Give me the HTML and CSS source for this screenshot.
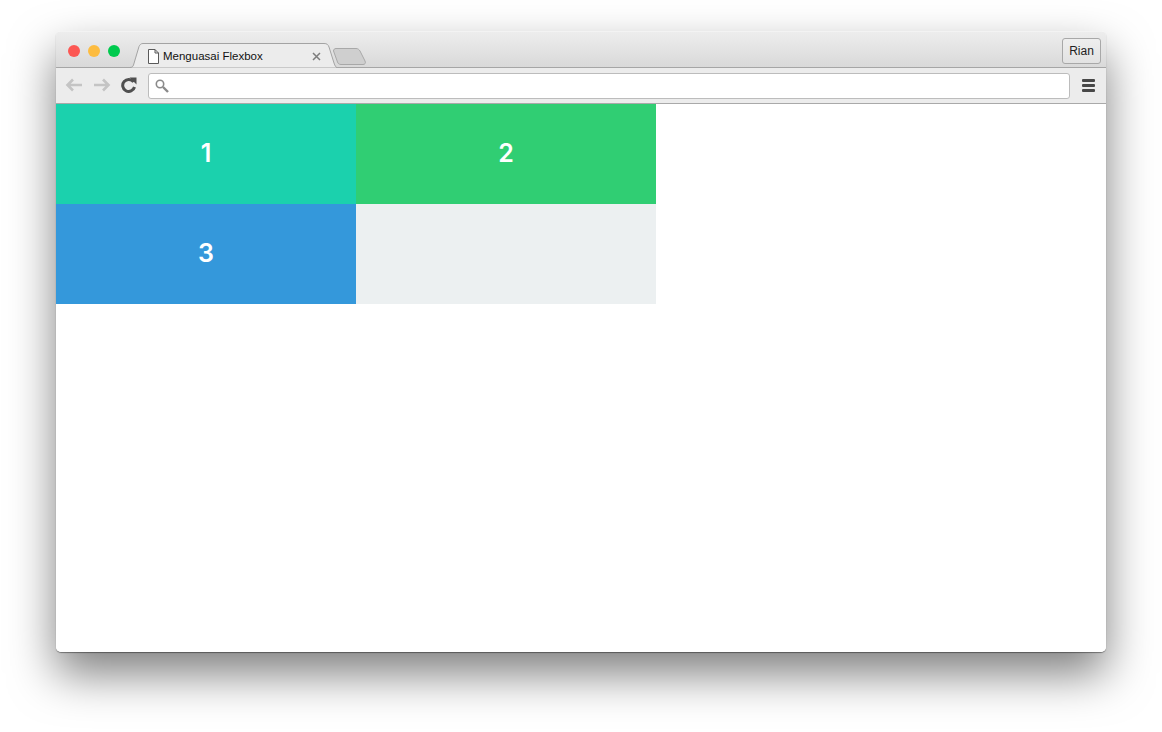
FILE: index.html

```html
<!DOCTYPE html>
<html lang="en">
<head>
    <meta charset="UTF-8">
    <meta name="viewport" content="width=device-width, initial-scale=1.0">
    <title>Menguasai Flexbox</title>
    <link rel="stylesheet" href="styles.css">
</head>
<body>
    <div class="window">
        <div class="titlebar">
            <div class="lights">
                <span class="light red"></span>
                <span class="light yellow"></span>
                <span class="light green"></span>
            </div>
            <div class="tab">
                <svg class="tab-shape" width="207" height="25" viewBox="0 0 207 25">
                    <path d="M0 24.500 C2 24.500 3 23.500 3.500 22 L9 3.500 C10 1.500 11 .5 13 .5 L194 .5 C197 .5 198 1.500 199 4 L204 20 C205 23 206 24.500 207 24.500" fill="#ececec" stroke="#a3a3a3"/>
                </svg>
                <svg class="page-icon" width="11" height="15" viewBox="0 0 11 15">
                    <path d="M.5 .5 H7 L10.500 4 V14.500 H.5 Z M7 .5 V4 H10.500" fill="#fff" stroke="#5a5a5a"/>
                </svg>
                <span class="tab-title">Menguasai Flexbox</span>
                <svg class="tab-close" width="9" height="9" viewBox="0 0 9 9">
                    <path d="M1 1 L8 8 M8 1 L1 8" stroke="#7d7d7d" stroke-width="1.500"/>
                </svg>
            </div>
            <svg class="new-tab" width="33" height="17" viewBox="0 0 33 17">
                <path d="M.5 3 C.5 1.500 1.500 .5 3 .5 H23 C25 .5 26 1.500 27 3 L32 13 C33 15 32 16.500 30 16.500 H8 C6 16.500 5 15.500 4.500 14 Z" fill="#cfcfcf" stroke="#a8a8a8"/>
            </svg>
            <button class="profile">Rian</button>
        </div>
        <div class="toolbar">
            <svg class="nav-icon" width="18" height="14" viewBox="0 0 18 14">
                <path d="M8 1.500 L2.500 7 L8 12.500 M2.500 7 H17" fill="none" stroke="#c4c4c4" stroke-width="2.600"/>
            </svg>
            <svg class="nav-icon" width="18" height="14" viewBox="0 0 18 14">
                <path d="M10 1.500 L15.500 7 L10 12.500 M15.500 7 H1" fill="none" stroke="#c4c4c4" stroke-width="2.600"/>
            </svg>
            <svg class="nav-icon reload" width="16" height="16" viewBox="0 0 16 16">
                <path d="M12.600 5 A6 6 0 1 0 13.500 10" fill="none" stroke="#505050" stroke-width="3"/>
                <path d="M8.500 .5 H15.500 V7.500 Z" fill="#505050"/>
            </svg>
            <div class="omnibox">
                <svg width="14" height="14" viewBox="0 0 14 14">
                    <circle cx="5" cy="5" r="3.700" fill="none" stroke="#8a8a8a" stroke-width="1.600"/>
                    <path d="M8 8 L13 13" stroke="#8a8a8a" stroke-width="2.400"/>
                </svg>
            </div>
            <div class="menu">
                <span></span>
                <span></span>
                <span></span>
            </div>
        </div>
        <div class="content">
            <div class="grid">
                <div class="item teal">1</div>
                <div class="item emerald">2</div>
                <div class="item blue">3</div>
                <div class="item empty"></div>
            </div>
        </div>
    </div>
</body>
</html>
```

FILE: styles.css

```css
html, body {
    margin: 0;
    padding: 0;
    height: 100%;
    background: #fff;
    overflow: hidden;
}
body {
    padding: 31px 56px 0;
    font-family: "Liberation Sans", Arial, sans-serif;
}
.window {
    width: 1050px;
    height: 621px;
    display: flex;
    flex-direction: column;
    border-radius: 5px;
    overflow: hidden;
    box-shadow: 0 1px 1px rgba(0, 0, 0, .4), 0 22px 46px rgba(0, 0, 0, .5);
}
.titlebar {
    height: 35px;
    flex: none;
    display: flex;
    align-items: flex-start;
    background: linear-gradient(#ededed, #d9d9d9);
    border-top: 1px solid #f3f3f3;
    border-bottom: 1px solid #a6a6a6;
}
.lights {
    display: flex;
    gap: 8px;
    padding: 13px 0 0 12px;
}
.light {
    width: 12px;
    height: 12px;
    border-radius: 50%;
}
.red { background: #fc5753; }
.yellow { background: #fdbc40; }
.green { background: #00ca4e; }
.tab {
    position: relative;
    width: 207px;
    height: 25px;
    margin: 11px 0 0 10px;
    display: flex;
    align-items: center;
    font-size: 11.5px;
    color: #111;
}
.tab-shape {
    position: absolute;
    left: 0;
    top: 0;
}
.page-icon {
    position: relative;
    margin: 1px 0 0 18px;
}
.tab-title {
    position: relative;
    margin-left: 4px;
    flex: 1;
    padding-top: 1px;
}
.tab-close {
    position: relative;
    margin: 1px 16px 0 0;
}
.new-tab {
    margin: 16px 0 0 -4px;
}
.profile {
    margin: 6px 5px 0 auto;
    width: 39px;
    height: 26px;
    padding: 0;
    font-family: inherit;
    font-size: 12px;
    color: #222;
    background: linear-gradient(#eeeeee, #e2e2e2);
    border: 1px solid #a8a8a8;
    border-radius: 3px;
}
.toolbar {
    height: 35px;
    flex: none;
    display: flex;
    align-items: center;
    background: #ececec;
    border-bottom: 1px solid #a9a9a9;
}
.nav-icon {
    margin: 0 0 2px 8px;
    flex: none;
}
.nav-icon:first-child {
    margin-left: 9px;
    margin-right: 2px;
}
.nav-icon.reload {
    margin-left: 10px;
}
.omnibox {
    margin-left: 11px;
    width: 922px;
    height: 26px;
    box-sizing: border-box;
    display: flex;
    align-items: center;
    padding-left: 6px;
    background: #fff;
    border: 1px solid #bcbcbc;
    border-radius: 3px;
}
.menu {
    margin: 0 0 1px 12px;
    width: 13px;
    display: flex;
    flex-direction: column;
    gap: 2px;
}
.menu span {
    height: 3px;
    border-radius: 1px;
    background: #484848;
}
.content {
    flex: 1;
    background: #fff;
}
.grid {
    width: 600px;
    display: grid;
    grid-template-columns: 300px 300px;
    grid-auto-rows: 100px;
}
.item {
    display: flex;
    align-items: center;
    justify-content: center;
    padding-bottom: 2px;
    box-sizing: border-box;
    font-family: Inter, sans-serif;
    font-weight: 600;
    font-size: 25px;
    color: #fff;
}
.teal { background: #1bd1ad; }
.emerald { background: #30ce73; }
.blue { background: #3498db; }
.empty { background: #ecf0f1; }
```
